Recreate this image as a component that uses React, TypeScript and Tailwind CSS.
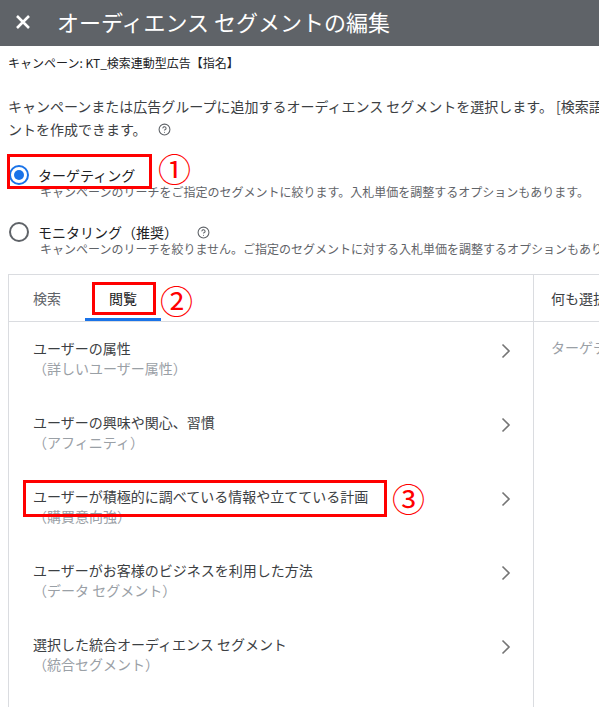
import { CircleHelp } from "lucide-react";

const rows = [
  { title: "ユーザーの属性", sub: "（詳しいユーザー属性）" },
  { title: "ユーザーの興味や関心、習慣", sub: "（アフィニティ）" },
  { title: "ユーザーが積極的に調べている情報や立てている計画", sub: "（購買意向強）" },
  { title: "ユーザーがお客様のビジネスを利用した方法", sub: "（データ セグメント）" },
  { title: "選択した統合オーディエンス セグメント", sub: "（統合セグメント）" },
];

function Chevron() {
  return (
    <svg width="10" height="16" viewBox="0 0 10 16" className="shrink-0">
      <polyline points="1.5,1.5 8,8 1.5,14.5" fill="none" stroke="#757575" strokeWidth="1.6" />
    </svg>
  );
}

function Radio({ checked }: { checked?: boolean }) {
  return (
    <span
      className={
        checked
          ? "flex h-[20px] w-[20px] shrink-0 items-center justify-center rounded-full border-2 border-[#1a73e8]"
          : "flex h-[20px] w-[20px] shrink-0 items-center justify-center rounded-full border-2 border-[#5f6368]"
      }
    >
      {checked && <span className="h-[10px] w-[10px] rounded-full bg-[#1a73e8]" />}
    </span>
  );
}

export default function App() {
  return (
    <div
      className="relative h-[707px] w-[599px] overflow-hidden bg-white text-[#202124]"
      style={{ fontFamily: '"Noto Sans CJK JP", "Noto Sans", sans-serif' }}
    >
      <header className="flex h-[46px] items-center bg-[#5f6368] text-white">
        <svg width="16" height="16" viewBox="0 0 16 16" className="ml-[15px] mt-[-2px]">
          <path d="M2 2 L14 14 M14 2 L2 14" stroke="white" strokeWidth="2.6" />
        </svg>
        <h1 className="ml-[26px] mt-[-4px] whitespace-nowrap text-[22px] font-normal">
          オーディエンス セグメントの編集
        </h1>
      </header>

      <p className="mt-[9px] whitespace-nowrap px-2 text-[12px] leading-[16px]">
        キャンペーン: KT_検索連動型広告【指名】
      </p>

      <div className="mt-[24px] whitespace-nowrap px-2 text-[14px] leading-[23px] text-[#3c4043]">
        <p>キャンペーンまたは広告グループに追加するオーディエンス セグメントを選択します。 [検索語句]</p>
        <p className="flex items-center">
          ントを作成できます。
          <CircleHelp size={13} className="ml-[11px] text-[#5f6368]" />
        </p>
      </div>

      <div className="mt-[24px] pl-[9px]">
        <div className="flex items-center gap-[9px]">
          <Radio checked />
          <span className="text-[14px] leading-[20px]">ターゲティング</span>
        </div>
        <p className="ml-[31px] mt-[-1px] whitespace-nowrap text-[12px] leading-[16px] text-[#5f6368]">
          キャンペーンのリーチをご指定のセグメントに絞ります。入札単価を調整するオプションもあります。
        </p>
        <div className="mt-[22px] flex items-center gap-[9px]">
          <Radio />
          <span className="text-[14px] leading-[20px]">モニタリング（推奨）</span>
          <CircleHelp size={13} className="ml-[10px] text-[#5f6368]" />
        </div>
        <p className="ml-[31px] mt-[-1px] whitespace-nowrap text-[12px] leading-[16px] text-[#5f6368]">
          キャンペーンのリーチを絞りません。ご指定のセグメントに対する入札単価を調整するオプションもあります。
        </p>
      </div>

      <div className="ml-[8px] mt-[17px] flex h-[500px] border-l border-t border-[#dadce0]">
        <div className="w-[525px] shrink-0 border-r border-[#dadce0]">
          <div className="flex h-[47px] border-b border-[#dadce0] text-[14px]">
            <div className="flex w-[76px] items-center justify-center text-[#5f6368]">検索</div>
            <div className="flex w-[76px] items-center justify-center border-b-[3px] border-[#1a73e8] pt-[3px] text-[#202124]">
              閲覧
            </div>
          </div>
          {rows.map((r) => (
            <div key={r.title} className="flex h-[74px] items-start pl-[24px] pr-[22px] pt-[16px]">
              <div className="flex-1">
                <p className="text-[14px] leading-[20px] text-[#3c4043]">{r.title}</p>
                <p className="text-[14px] leading-[20px] text-[#9aa0a6]">{r.sub}</p>
              </div>
              <div className="mt-[5px]">
                <Chevron />
              </div>
            </div>
          ))}
        </div>
        <div className="flex-1">
          <div className="flex h-[47px] items-center whitespace-nowrap border-b border-[#dadce0] pl-[17px] text-[14px] text-[#3c4043]">
            何も選択されていません
          </div>
          <p className="whitespace-nowrap pl-[17px] pt-[15px] text-[14px] leading-[20px] text-[#9aa0a6]">
            ターゲティングを追加
          </p>
        </div>
      </div>

      {/* annotations */}
      <div className="absolute left-[7px] top-[154px] h-[35px] w-[145px] border-[3px] border-[#ff0000]" />
      <span className="absolute left-[158px] top-[152px] text-[33px] leading-[32px] text-[#ff0000]">①</span>
      <div className="absolute left-[92px] top-[282px] h-[33px] w-[64px] border-[3px] border-[#ff0000]" />
      <span className="absolute left-[160px] top-[284px] text-[33px] leading-[32px] text-[#ff0000]">②</span>
      <div className="absolute left-[23px] top-[480px] h-[37px] w-[364px] border-[3px] border-[#ff0000]" />
      <span className="absolute left-[392px] top-[482px] text-[33px] leading-[32px] text-[#ff0000]">③</span>
    </div>
  );
}
